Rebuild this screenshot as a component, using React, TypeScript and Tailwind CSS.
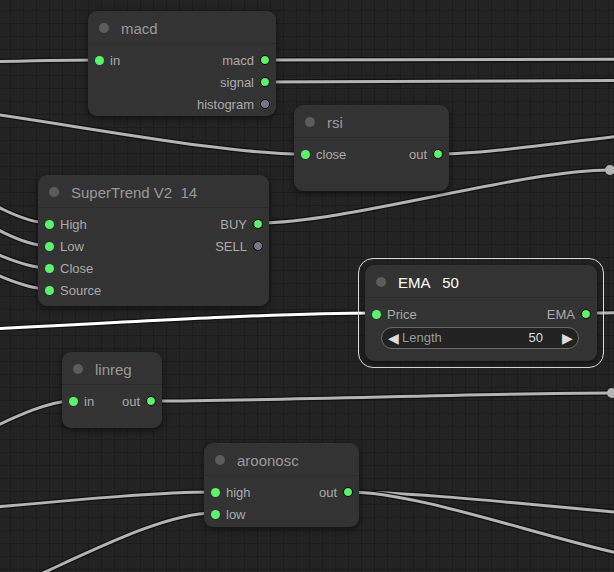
import React from 'react';

type Slot = { label: string; linked?: boolean };

interface NodeProps {
  x: number;
  y: number;
  w: number;
  h: number;
  title: string;
  inputs?: Slot[];
  outputs?: Slot[];
  selected?: boolean;
  widget?: { label: string; value: string };
}

// LiteGraph style bezier: control points pulled out by a quarter of the distance
function linkPath(x1: number, y1: number, x2: number, y2: number) {
  const d = Math.hypot(x2 - x1, y2 - y1) * 0.25;
  return `M ${x1} ${y1} C ${x1 + d} ${y1}, ${x2 - d} ${y2}, ${x2} ${y2}`;
}

const LINKS: { from: [number, number]; to: [number, number]; active?: boolean }[] = [
  { from: [-100, 63], to: [99, 60] },
  { from: [265, 60], to: [750, 59] },
  { from: [265, 82], to: [750, 80] },
  { from: [-150, 100], to: [304, 154] },
  { from: [438, 154], to: [700, 130] },
  { from: [258, 223], to: [610, 170] },
  { from: [-150, 135], to: [49, 223] },
  { from: [-150, 157], to: [49, 246] },
  { from: [-150, 195], to: [49, 268] },
  { from: [-150, 214], to: [49, 289] },
  { from: [-300, 340], to: [376, 313], active: true },
  { from: [586, 313], to: [700, 311] },
  { from: [-100, 460], to: [72, 401] },
  { from: [151, 401], to: [611, 393] },
  { from: [-200, 520], to: [214, 492] },
  { from: [-100, 620], to: [214, 513] },
  { from: [348, 492], to: [750, 520] },
  { from: [348, 492], to: [700, 565] },
];

function Links() {
  return (
    <svg className="absolute inset-0" width={614} height={572}>
      {LINKS.map((l, i) => {
        const d = linkPath(l.from[0], l.from[1], l.to[0], l.to[1]);
        return (
          <g key={i} fill="none">
            <path d={d} stroke="#111" strokeWidth={5.5} />
            <path d={d} stroke={l.active ? '#ffffff' : '#b3b3b3'} strokeWidth={3} />
          </g>
        );
      })}
      <circle cx={610} cy={170} r={5} fill="#b3b3b3" />
      <circle cx={612} cy={393} r={5} fill="#b3b3b3" />
    </svg>
  );
}

function InDot() {
  return <span className="w-[9px] h-[9px] rounded-full bg-[#5cf26b] shrink-0" />;
}

function OutDot({ linked }: { linked?: boolean }) {
  return (
    <span
      className={`w-[10px] h-[10px] rounded-full border border-black shrink-0 ${
        linked ? 'bg-[#5cf26b]' : 'bg-[#77778a]'
      }`}
    />
  );
}

function GraphNode({ x, y, w, h, title, inputs = [], outputs = [], selected, widget }: NodeProps) {
  const rows = Math.max(inputs.length, outputs.length);
  return (
    <div className="absolute" style={{ left: x, top: y, width: w, height: h }}>
      {selected && <div className="absolute -inset-[7px] rounded-[15px] border border-[#dcdcdc]" />}
      <div className="relative h-full rounded-[9px] bg-[#333333] shadow-[0_2px_6px_rgba(0,0,0,0.55)] flex flex-col">
        <div className="h-[33px] shrink-0 flex items-center pl-[11px] pt-[1px] gap-[12px] border-b border-[#2b2b2b]">
          <span className="w-[10px] h-[10px] rounded-full bg-[#5c5c5c]" />
          <span
            className={`text-[15px] leading-none pt-[2px] whitespace-pre ${
              selected ? 'text-white' : 'text-[#999999]'
            }`}
          >
            {title}
          </span>
        </div>
        <div className="pt-[5px] flex flex-col">
          {Array.from({ length: rows }).map((_, i) => (
            <div key={i} className="h-[22px] flex items-center justify-between text-[13px] text-[#aaaaaa]">
              <div className="flex items-center gap-[6px] pl-[7px]">
                {inputs[i] && (
                  <>
                    <InDot />
                    <span className="pt-[1px]">{inputs[i].label}</span>
                  </>
                )}
              </div>
              <div className="flex items-center gap-[6px] pr-[6px]">
                {outputs[i] && (
                  <>
                    <span className="pt-[1px]">{outputs[i].label}</span>
                    <OutDot linked={outputs[i].linked} />
                  </>
                )}
              </div>
            </div>
          ))}
          {widget && (
            <div className="mt-[2px] ml-[16px] mr-[18px] h-[22px] rounded-full bg-[#222222] border border-[#6a6a6a] flex items-center pl-[6px] pr-[5px] text-[13px]">
              <span className="text-[#dddddd] text-[14px] leading-none">◀</span>
              <span className="ml-[3px] text-[#999999]">{widget.label}</span>
              <span className="ml-auto text-[#dddddd]">{widget.value}</span>
              <span className="ml-[19px] text-[#dddddd] text-[14px] leading-none">▶</span>
            </div>
          )}
        </div>
      </div>
    </div>
  );
}

export default function App() {
  return (
    <div
      className="relative w-[614px] h-[572px] overflow-hidden bg-[#232323] bg-[linear-gradient(to_right,#1c1c1c_1px,transparent_1px),linear-gradient(to_bottom,#1c1c1c_1px,transparent_1px)] bg-[size:13px_13px] bg-[position:10px_10px]"
      style={{ fontFamily: '"Liberation Sans", Arial, sans-serif' }}
    >
      <Links />

      <GraphNode
        x={88}
        y={11}
        w={188}
        h={105}
        title="macd"
        inputs={[{ label: 'in' }]}
        outputs={[
          { label: 'macd', linked: true },
          { label: 'signal', linked: true },
          { label: 'histogram' },
        ]}
      />
      <GraphNode
        x={294}
        y={105}
        w={155}
        h={86}
        title="rsi"
        inputs={[{ label: 'close' }]}
        outputs={[{ label: 'out', linked: true }]}
      />
      <GraphNode
        x={38}
        y={175}
        w={231}
        h={131}
        title="SuperTrend V2  14"
        inputs={[{ label: 'High' }, { label: 'Low' }, { label: 'Close' }, { label: 'Source' }]}
        outputs={[{ label: 'BUY', linked: true }, { label: 'SELL' }]}
      />
      <GraphNode
        x={365}
        y={265}
        w={232}
        h={96}
        title="EMA   50"
        selected
        inputs={[{ label: 'Price' }]}
        outputs={[{ label: 'EMA', linked: true }]}
        widget={{ label: 'Length', value: '50' }}
      />
      <GraphNode
        x={62}
        y={352}
        w={100}
        h={76}
        title="linreg"
        inputs={[{ label: 'in' }]}
        outputs={[{ label: 'out', linked: true }]}
      />
      <GraphNode
        x={204}
        y={443}
        w={155}
        h={84}
        title="aroonosc"
        inputs={[{ label: 'high' }, { label: 'low' }]}
        outputs={[{ label: 'out', linked: true }]}
      />
    </div>
  );
}
